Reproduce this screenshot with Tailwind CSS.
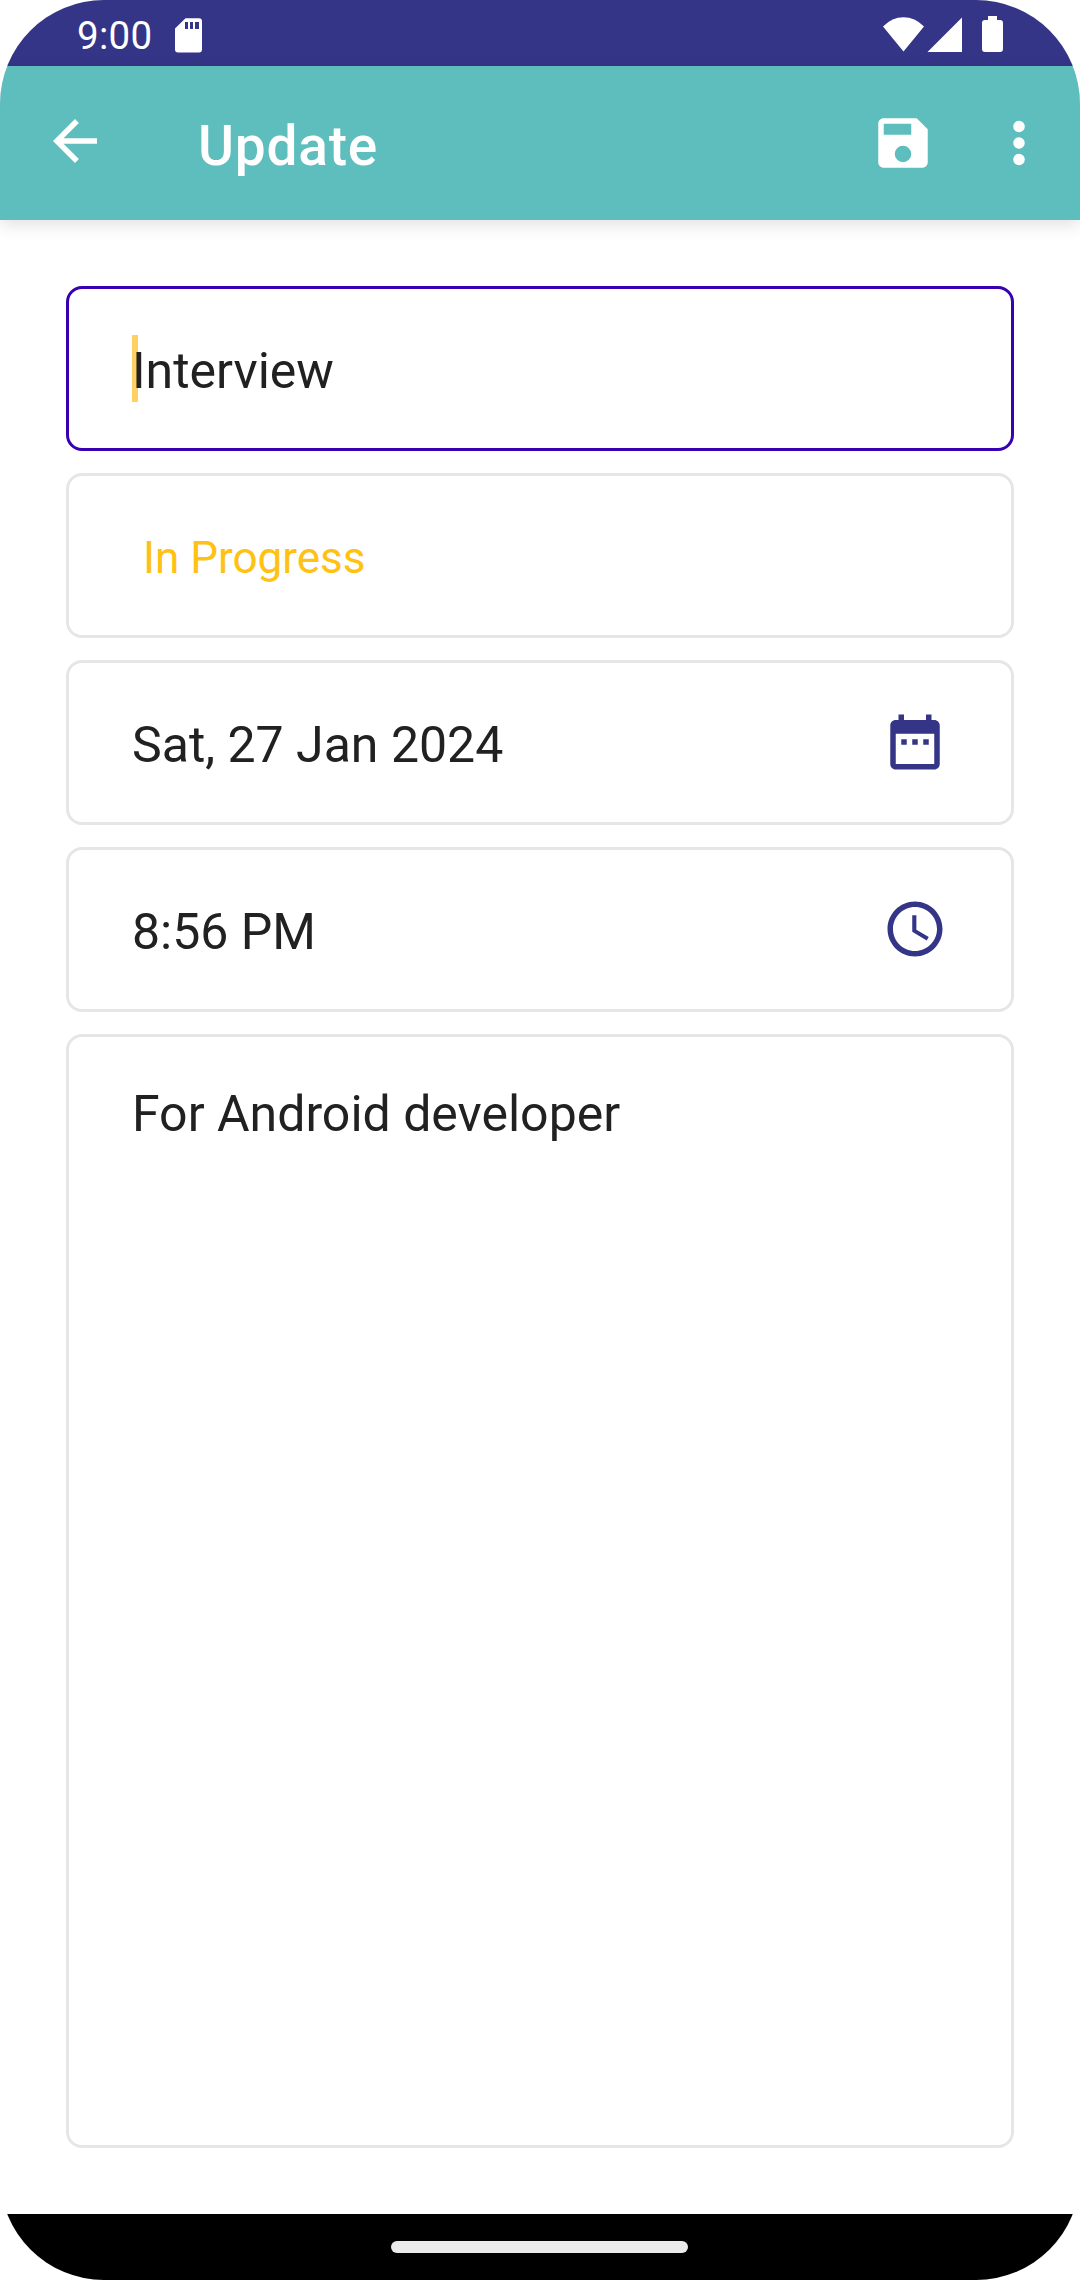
<!DOCTYPE html>
<html lang="en">
<head>
<meta charset="utf-8">
<title>Update</title>
<script src="https://cdn.jsdelivr.net/npm/@tailwindcss/browser@4"></script>
</head>
<body class="bg-white">
<div class="flex h-[2280px] w-[1080px] flex-col overflow-hidden rounded-[104px] bg-white font-[Roboto,sans-serif] text-[50px] leading-[58px] text-[#212121]">
  <!-- Status bar -->
  <div class="flex h-[66px] shrink-0 items-center justify-between bg-[#343587] pr-[76px] pl-[77px] text-white">
    <div class="flex items-center">
      <span class="w-[98px] pt-[6px] text-[38.5px] leading-[46px] tracking-[0.3px]">9:00</span>
      <svg class="mt-[4px] h-[35px] w-[27px]" viewBox="0 0 27 35" fill="currentColor"><path fill-rule="evenodd" d="M10.500 .2H24Q27 .2 27 3.200V31.500Q27 34.500 24 34.500H3Q0 34.500 0 31.500V10.500zM10 4v7h3V4zm5 0v7h3V4zm5 0v7h4V4z"/></svg>
    </div>
    <svg class="h-[66px] w-[122px]" viewBox="882 0 122 66" fill="currentColor"><path d="M883 26.500Q892 17.300 903.500 17.300T924 26.500L903.500 51.500zM962 17.500V52H927.500zM988 16h9v4h3q3 0 3 3v26q0 3-3 3h-15q-3 0-3-3V23q0-3 3-3h3z"/></svg>
  </div>
  <!-- App bar -->
  <div class="flex h-[154px] shrink-0 items-center bg-[#5ebdbd] pl-[42px] text-white shadow-[0_5px_16px_rgba(0,0,0,0.12)]">
    <svg class="mb-[4px] size-[66px]" viewBox="0 0 24 24" fill="currentColor"><path d="M20 11H7.830l5.590-5.590L12 4l-8 8 8 8 1.410-1.410L7.830 13H20v-2z"/></svg>
    <h1 class="ml-[90px] flex-1 pt-[6px] text-[55px] leading-[64px] font-medium tracking-[0.8px]">Update</h1>
    <svg class="size-[66px]" viewBox="0 0 24 24" fill="currentColor"><path fill-rule="evenodd" d="M17 3H5c-1.110 0-2 .9-2 2v14c0 1.100.89 2 2 2h14c1.100 0 2-.9 2-2V7l-4-4zm-5 16a3 3 0 1 1 0-6 3 3 0 0 1 0 6zm3-10H5V5h10v4z"/></svg>
    <svg class="mr-[28px] ml-[50px] size-[66px]" viewBox="0 0 24 24" fill="currentColor"><circle cx="12" cy="6" r="2.100"/><circle cx="12" cy="12" r="2.100"/><circle cx="12" cy="18" r="2.100"/></svg>
  </div>
  <!-- Form -->
  <main class="flex flex-1 flex-col gap-[22px] p-[66px]">
    <div class="flex h-[165px] items-center rounded-[16px] border-[3px] border-[#3700b3] px-[63px]">
      <div class="relative pt-[5px]"><span class="absolute top-[-2px] left-0 h-[67px] w-[6px] bg-[#ffd063]"></span><span class="relative">Interview</span></div>
    </div>
    <div class="flex h-[165px] items-center rounded-[16px] border-[3px] border-[#e6e6e6] px-[74px] pt-[5px] text-[44px] text-[#ffc112]">In Progress</div>
    <div class="flex h-[165px] items-center justify-between rounded-[16px] border-[3px] border-[#e6e6e6] pr-[63px] pl-[63px]">
      <span class="pt-[5px]">Sat, 27 Jan 2024</span>
      <svg class="mb-[2px] size-[66px] text-[#343587]" viewBox="0 0 24 24" fill="currentColor"><path d="M9 11H7v2h2v-2zm4 0h-2v2h2v-2zm4 0h-2v2h2v-2zm2-7h-1V2h-2v2H8V2H6v2H5c-1.110 0-1.990.9-1.990 2L3 20c0 1.100.89 2 2 2h14c1.100 0 2-.9 2-2V6c0-1.100-.9-2-2-2zm0 16H5V9h14v11z"/></svg>
    </div>
    <div class="flex h-[165px] items-center justify-between rounded-[16px] border-[3px] border-[#e6e6e6] pr-[63px] pl-[63px]">
      <span class="pt-[5px]">8:56 PM</span>
      <svg class="mb-[2px] size-[66px] text-[#343587]" viewBox="0 0 24 24" fill="currentColor"><path d="M11.990 2C6.470 2 2 6.480 2 12s4.470 10 9.990 10C17.520 22 22 17.520 22 12S17.520 2 11.990 2zM12 20c-4.420 0-8-3.580-8-8s3.580-8 8-8 8 3.580 8 8-3.580 8-8 8zm.5-13H11v6l5.250 3.150.75-1.230-4.500-2.670z"/></svg>
    </div>
    <div class="flex-1 rounded-[16px] border-[3px] border-[#e6e6e6] px-[63px] pt-[48px]">For Android developer</div>
  </main>
  <!-- Navigation bar -->
  <div class="flex h-[66px] shrink-0 items-center justify-center bg-black">
    <div class="mr-[2px] h-[12px] w-[297px] rounded-full bg-[#ebebeb]"></div>
  </div>
</div>
</body>
</html>
